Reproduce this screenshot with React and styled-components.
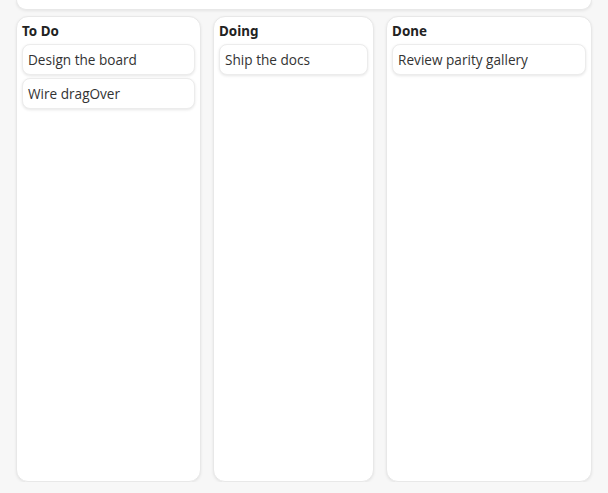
import React from "react";
import styled, { createGlobalStyle } from "styled-components";

const Global = createGlobalStyle`
  html, body { margin: 0; padding: 0; background: #f7f7f7; }
  body { font-family: "Open Sans", "Noto Sans", sans-serif; color: #222; }
`;

const Page = styled.div`
  padding: 0 16px;
  display: flex;
  flex-direction: column;
  gap: 6px;
`;

const TopPanel = styled.div`
  height: 9px;
  background: #fff;
  border: 1px solid #e8e8e8;
  border-top: none;
  border-radius: 0 0 12px 12px;
  box-shadow: 0 1px 3px rgba(0,0,0,0.08);
`;

const Board = styled.div`
  display: flex;
  gap: 12px;
`;

const Column = styled.div`
  flex: 1 1 auto;
  height: 466px;
  box-sizing: border-box;
  background: #fff;
  border: 1px solid #e8e8e8;
  border-radius: 12px;
  box-shadow: 0 1px 3px rgba(0,0,0,0.08);
  padding: 4px 5px;
  display: flex;
  flex-direction: column;
  gap: 3px;
`;

const Title = styled.div`
  font-family: "Noto Sans", "Open Sans", sans-serif;
  font-size: 13.4px;
  font-weight: 700;
  line-height: 19px;
  padding: 1px 0 0;
  color: #222;
`;

const Card = styled.div`
  background: #fff;
  border: 1px solid #ececec;
  border-radius: 8px;
  box-shadow: 0 1px 3px rgba(0,0,0,0.1);
  padding: 5px 5px;
  font-size: 13.6px;
  line-height: 19px;
  color: #333;
  white-space: nowrap;
`;

const columns = [
  { title: "To Do", cards: ["Design the board", "Wire dragOver"] },
  { title: "Doing", cards: ["Ship the docs"] },
  { title: "Done", cards: ["Review parity gallery"] },
];

export default function App() {
  return (
    <>
      <Global />
      <Page>
        <TopPanel />
        <Board>
          {columns.map((c) => (
            <Column key={c.title}>
              <Title>{c.title}</Title>
              {c.cards.map((t) => (
                <Card key={t}>{t}</Card>
              ))}
            </Column>
          ))}
        </Board>
      </Page>
    </>
  );
}
